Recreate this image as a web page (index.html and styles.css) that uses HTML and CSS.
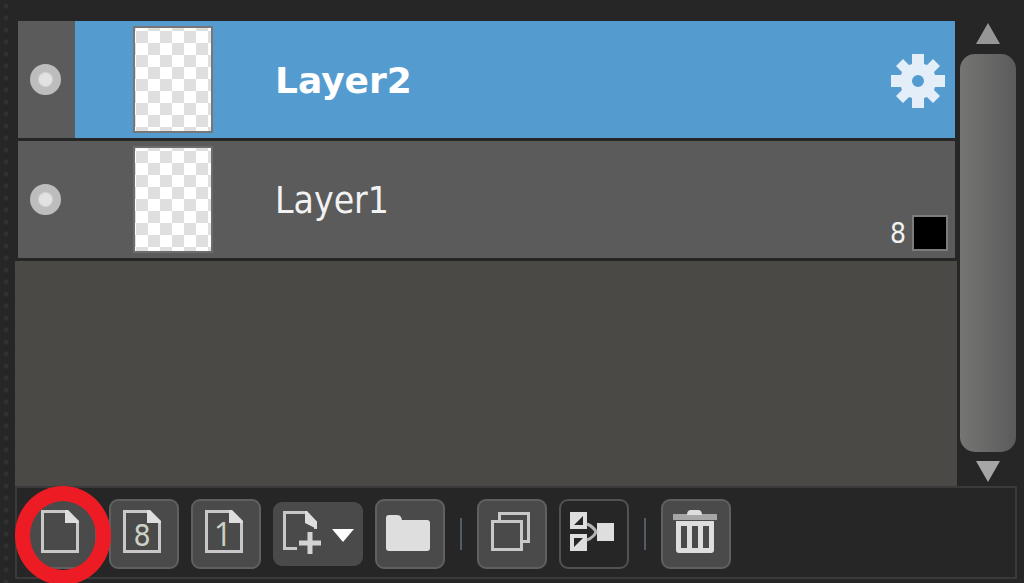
FILE: index.html
```html
<!DOCTYPE html>
<html lang="en">
<head>
    <meta charset="UTF-8">
    <meta name="viewport" content="width=device-width, initial-scale=1.0">
    <title>Layers</title>
    <link rel="stylesheet" href="styles.css">
</head>
<body>
    <div class="panel">
        <div class="grip"></div>
        <div class="panel-main">
            <div class="layers">
                <ul class="layer-list">
                    <li class="layer selected">
                        <div class="visibility">
                            <input type="checkbox" class="eye" aria-label="Show Layer2" checked>
                        </div>
                        <div class="layer-body">
                            <div class="thumb"></div>
                            <span class="layer-name">Layer2</span>
                            <button class="gear-btn" aria-label="Layer settings">
                                <svg width="56" height="56" viewBox="-28 -29 56 56" fill="#e3eef8">
                                    <path fill-rule="evenodd" d="M-6 -27H6V-17L9 -16L15 -22L22 -15L16 -9L17 -6H27V6H17L16 9L22 15L15 22L9 16L6 17V27H-6V17L-9 16L-15 22L-22 15L-16 9L-17 6H-27V-6H-17L-16 -9L-22 -15L-15 -22L-9 -16L-6 -17ZM0 -6A6 6 0 1 0 0 6A6 6 0 1 0 0 -6Z"/>
                                </svg>
                            </button>
                        </div>
                    </li>
                    <li class="layer">
                        <div class="visibility">
                            <input type="checkbox" class="eye" aria-label="Show Layer1" checked>
                        </div>
                        <div class="layer-body">
                            <div class="thumb"></div>
                            <span class="layer-name">Layer1</span>
                            <div class="depth">
                                <span>8</span>
                                <span class="swatch"></span>
                            </div>
                        </div>
                    </li>
                </ul>
                <div class="scrollbar">
                    <button class="arrow" aria-label="Scroll up">
                        <svg width="24" height="22" viewBox="0 0 24 22"><path d="M12 0L24 21H0Z" fill="#969696"/></svg>
                    </button>
                    <div class="scroll-thumb"></div>
                    <button class="arrow" aria-label="Scroll down">
                        <svg width="24" height="22" viewBox="0 0 24 22"><path d="M0 0H24L12 21Z" fill="#a6a6a6"/></svg>
                    </button>
                </div>
            </div>

            <div class="toolbar">
                <button class="tool marked" aria-label="New layer">
                    <svg width="66" height="66" viewBox="2 2 66 66">
                        <path class="line" d="M15.5 12.5H40L50.5 23V52.5H15.5Z"/>
                        <path class="solid" d="M38 11V24H52V22L41 11Z"/>
                    </svg>
                </button>
                <button class="tool" aria-label="New 8bit layer">
                    <svg width="66" height="66" viewBox="2 2 66 66">
                        <path class="line" d="M15.5 12.5H40L50.5 23V52.5H15.5Z"/>
                        <path class="solid" d="M38 11V24H52V22L41 11Z"/>
                        <text class="digit" x="33" y="47">8</text>
                    </svg>
                </button>
                <button class="tool" aria-label="New 1bit layer">
                    <svg width="66" height="66" viewBox="2 2 66 66">
                        <path class="line" d="M15.5 12.5H40L50.5 23V52.5H15.5Z"/>
                        <path class="solid" d="M38 11V24H52V22L41 11Z"/>
                        <text class="digit one" x="32" y="47">1</text>
                    </svg>
                </button>
                <button class="tool wide" aria-label="Add layer">
                    <svg width="90" height="64" viewBox="0 0 90 64">
                        <path class="line" d="M24 46.5H11.5V10.5H33L42.5 20V27"/>
                        <path class="solid" d="M32 9V21L44 27V20L34 9Z"/>
                        <path class="plus" d="M37 30V52M26 41H48"/>
                        <path d="M59 27H81L70 40Z" fill="#fff"/>
                    </svg>
                </button>
                <button class="tool" aria-label="New folder">
                    <svg width="66" height="66" viewBox="2 2 66 66">
                        <path class="solid" d="M11 19Q11 16 14 16H22Q25 16 26 18L27 21H52Q55 21 55 24V49Q55 52 52 52H14Q11 52 11 49Z"/>
                    </svg>
                </button>
                <span class="separator"></span>
                <button class="tool" aria-label="Duplicate layer">
                    <svg width="66" height="66" viewBox="2 2 66 66">
                        <path class="line" d="M22.5 21V14.5H51.5V42.5H46M15.5 22.5H44.5V50.5H15.5Z"/>
                    </svg>
                </button>
                <button class="tool dark" aria-label="Merge layer">
                    <svg width="66" height="66" viewBox="2 2 66 66">
                        <path class="solid" d="M11 13H28V30H11ZM11 35H28V52H11ZM38 24H55V42H38Z"/>
                        <path d="M24 17V26H15ZM15 39H24L15 48Z" fill="#262626"/>
                        <path d="M28 25Q35 28 37 33Q35 38 28 41" fill="none" stroke="#b5b5b5" stroke-width="3"/>
                    </svg>
                </button>
                <span class="separator"></span>
                <button class="tool" aria-label="Delete layer">
                    <svg width="66" height="66" viewBox="2 2 66 66">
                        <path d="M12 15H56V21H12Z" fill="#a6a6a6"/>
                        <path class="solid" d="M26 16Q26 11 30 11H37Q41 11 41 16Z"/>
                        <path class="solid" fill-rule="evenodd" d="M15 22H53V51Q53 54 50 54H18Q15 54 15 51ZM20 27V49H26V27ZM31 27V49H37V27ZM42 27V49H48V27Z"/>
                    </svg>
                </button>
            </div>
        </div>
    </div>
</body>
</html>
```

FILE: styles.css
```css
:root {
    --bg: #262626;
    --row: #5b5b5b;
    --selected: #549bd0;
    --empty: #4a4946;
    --tool: #4a4a4a;
    --edge: #3a3a3a;
    --icon: #dedede;
    --mark: #ed1c24;
}

* {
    box-sizing: border-box;
}

body {
    margin: 0;
    background: var(--bg);
    color: #f2f2f2;
    font-family: "DejaVu Sans Condensed", "Open Sans", sans-serif;
    overflow: hidden;
}

button {
    padding: 0;
    border: none;
    background: none;
    cursor: pointer;
}

svg {
    display: block;
}

.panel {
    display: flex;
    height: 100vh;
}

/* Dotted drag handle */
.grip {
    width: 15px;
    background: radial-gradient(circle, #303030 0 2px, transparent 3px) 0 0 / 12px 12px repeat-y;
}

.panel-main {
    flex: 1;
    display: flex;
    flex-direction: column;
    padding: 21px 7px 4px 0;
}

.layers {
    flex: 1;
    display: flex;
    gap: 3px;
    padding-right: 1px;
}

.layer-list {
    flex: 1;
    margin: 0;
    padding: 0;
    list-style: none;
    background: var(--empty);
}

.layer {
    display: flex;
    height: 120px;
    background: var(--row);
    border: solid var(--bg);
    border-width: 0 2px 3px 3px;
}

.visibility {
    width: 57px;
    display: flex;
    align-items: center;
    padding-left: 12px;
}

.eye {
    appearance: none;
    width: 31px;
    height: 31px;
    margin: 0;
    border-radius: 50%;
    background: radial-gradient(circle, #e2e2e2 0 6px, #bdbdbd 8px);
}

.layer-body {
    flex: 1;
    display: flex;
    align-items: center;
    padding-left: 58px;
}

.thumb {
    width: 80px;
    height: 107px;
    margin-right: 62px;
    border: 2px solid #6c6c6c;
    background: repeating-conic-gradient(#fff 0 25%, #dfdfdf 0 50%) 1px 3px / 24px 24px;
}

.layer-name {
    flex: 1;
    padding-top: 2px;
    font-size: 37px;
}

.selected .layer-body {
    background: var(--selected);
}

.selected .thumb {
    border-color: #777;
}

.selected .layer-name {
    color: #fff;
    font-family: "DejaVu Sans", sans-serif;
    font-size: 36px;
    font-weight: bold;
}

.gear-btn {
    margin-right: 9px;
}

.depth {
    align-self: flex-end;
    display: flex;
    align-items: center;
    gap: 6px;
    margin: 7px;
    font-size: 28px;
}

.swatch {
    width: 36px;
    height: 36px;
    background: #000;
    border: 2px solid #7c7c7c;
}

.scrollbar {
    width: 56px;
    display: flex;
    flex-direction: column;
    align-items: center;
    gap: 9px;
    padding: 2px 0 3px;
}

.scroll-thumb {
    flex: 1;
    width: 100%;
    border-radius: 15px;
    background: linear-gradient(to right, #757573, #5b5b5b);
}

.toolbar {
    display: flex;
    align-items: center;
    gap: 12px;
    padding: 11px 10px 8px;
    border: 2px solid var(--edge);
}

.tool {
    position: relative;
    border: 2px solid #606060;
    border-radius: 9px;
    background: var(--tool);
}

.tool.wide {
    border: none;
}

.tool.dark {
    background: var(--bg);
    border-color: #525252;
}

/* Red ring around the highlighted tool */
.marked::after {
    content: "";
    position: absolute;
    z-index: 1;
    inset: -15px -16px -18px -14px;
    border: 15px solid var(--mark);
    border-radius: 50%;
}

.line {
    fill: none;
    stroke: #c8c8c8;
    stroke-width: 3;
}

.solid {
    fill: var(--icon);
}

.plus {
    fill: none;
    stroke: #d2d2d2;
    stroke-width: 5;
}

.digit {
    fill: #ccd1c4;
    font-family: "DejaVu Sans Condensed", "Open Sans", sans-serif;
    font-size: 30px;
    text-anchor: middle;
}

.digit.one {
    font-family: "Open Sans", sans-serif;
    font-size: 32px;
}

.separator {
    width: 2px;
    height: 32px;
    margin: 0 3px;
    background: #545b68;
}
```
